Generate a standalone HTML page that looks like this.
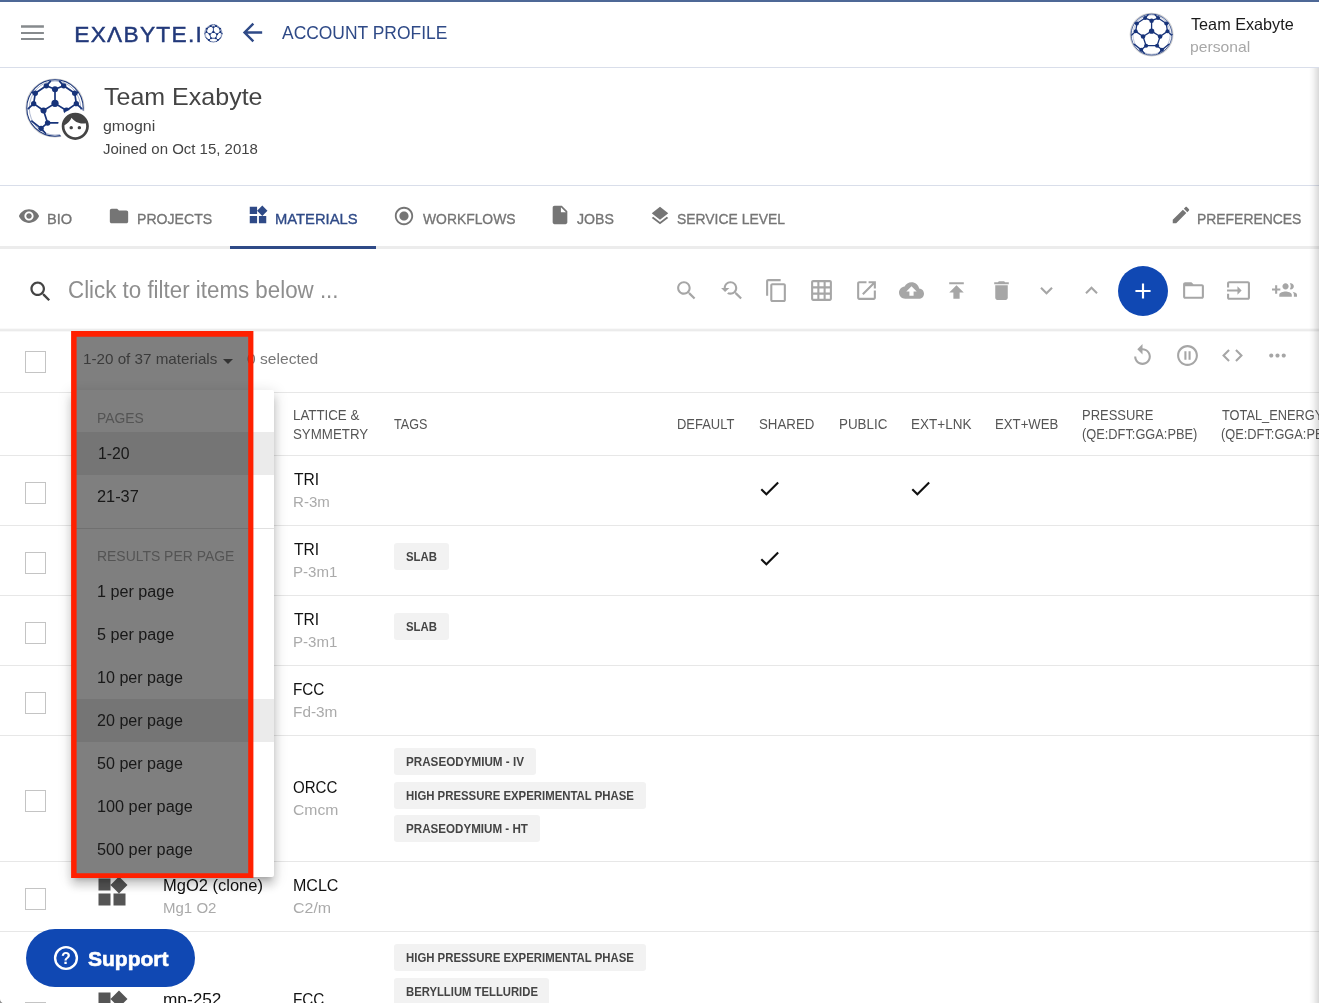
<!DOCTYPE html><html><head><meta charset="utf-8"><title>Account Profile</title><style>
html,body{margin:0;padding:0;background:#fff;}body{width:1319px;height:1003px;position:relative;overflow:hidden;font-family:"Liberation Sans", sans-serif;}
.t{position:absolute;white-space:pre;line-height:1;font-family:"Liberation Sans", sans-serif;transform-origin:0 0;}
.i{position:absolute;display:block;overflow:visible}.b{position:absolute;}
.cb{position:absolute;left:25px;width:19px;height:20px;border:1px solid #c4c4c4;background:#fff;}
.hl{position:absolute;left:0;width:1319px;height:1px;background:#e7e7e7;}
.tag{position:absolute;left:394px;height:27px;background:#f2f2f2;border-radius:3px;}
</style></head><body><div id="root" style="position:absolute;left:0;top:0;width:1319px;height:1003px;overflow:hidden;will-change:transform;">
<div class="b" style="left:0;top:0;width:1319px;height:2px;background:#4e6896"></div>
<div class="hl" style="top:67px;background:#d9deea"></div>
<div class="hl" style="top:185px;background:#d9deea"></div>
<div class="b" style="left:0;top:245.6px;width:1319px;height:3.4px;background:#ececec"></div>
<div class="b" style="left:230px;top:245.6px;width:146px;height:3.4px;background:#2f4a87"></div>
<div class="b" style="left:0;top:328.2px;width:1319px;height:4px;background:linear-gradient(to bottom,rgba(0,0,0,0),rgba(0,0,0,.085) 45%,rgba(0,0,0,.085) 58%,rgba(0,0,0,0))"></div>
<div class="hl" style="top:392px"></div>
<div class="hl" style="top:455px"></div>
<div class="cb" style="top:482px"></div>
<div class="hl" style="top:525px"></div>
<div class="cb" style="top:552px"></div>
<div class="hl" style="top:595px"></div>
<div class="cb" style="top:622px"></div>
<div class="hl" style="top:665px"></div>
<div class="cb" style="top:692px"></div>
<div class="hl" style="top:735px"></div>
<div class="cb" style="top:790px"></div>
<div class="hl" style="top:861px"></div>
<div class="cb" style="top:888px"></div>
<div class="hl" style="top:931px"></div>
<div class="cb" style="top:1002px"></div>
<div class="cb" style="top:351px"></div>
<div class="b" style="left:1118px;top:266px;width:50px;height:50px;border-radius:50%;background:#1048b3"></div>
<div class="tag" style="top:543px;width:54.5px"></div>
<div class="tag" style="top:613px;width:54.5px"></div>
<div class="tag" style="top:748px;width:141.5px"></div>
<div class="tag" style="top:782px;width:251.5px"></div>
<div class="tag" style="top:815.2px;width:145.5px"></div>
<div class="tag" style="top:944.2px;width:251.5px"></div>
<div class="tag" style="top:978px;width:154.5px"></div>
<svg class="i" style="left:21px;top:24px" width="24" height="17" viewBox="0 0 24 17"><path d="M0 1.2h22.9v2.6H0zM0 8h22.9v2H0zM0 14h22.9v2H0z" fill="#868a8d"/></svg>
<svg class="i" style="left:70px;top:18px" width="140" height="32" viewBox="0 0 140 32"><text x="4.3" y="23.5" font-family='"Liberation Sans", sans-serif' font-size="22.7" fill="#22397a" stroke="#22397a" stroke-width=".45" textLength="127.5" lengthAdjust="spacing">EXΛBYTE.I</text></svg>
<svg class="i" style="left:202.2px;top:21.8px" width="22.8" height="22.8" viewBox="-1.2128 -1.2128 2.4255 2.4255"><g stroke="#17337a" stroke-width="0.0904" fill="none" stroke-linecap="round"><circle r="0.926" stroke-width="0.0543"/><ellipse rx="0.841" ry="0.886" stroke-width="0.0271" stroke-opacity=".7"/><line x1="0" y1="-0.16" x2="0" y2="-0.645"/><line x1="0" y1="-0.16" x2="-0.395" y2="0.085"/><line x1="0" y1="-0.16" x2="0.395" y2="0.085"/><line x1="-0.395" y1="0.085" x2="-0.255" y2="0.515"/><line x1="0.395" y1="0.085" x2="0.255" y2="0.515"/><line x1="-0.255" y1="0.515" x2="0.255" y2="0.515"/><line x1="0" y1="-0.645" x2="-0.3" y2="-0.765"/><line x1="0" y1="-0.645" x2="0.3" y2="-0.765"/><line x1="-0.3" y1="-0.765" x2="-0.68" y2="-0.51"/><line x1="-0.68" y1="-0.51" x2="-0.735" y2="-0.15"/><line x1="-0.735" y1="-0.15" x2="-0.395" y2="0.085"/><line x1="0.3" y1="-0.765" x2="0.68" y2="-0.51"/><line x1="0.68" y1="-0.51" x2="0.735" y2="-0.15"/><line x1="0.735" y1="-0.15" x2="0.395" y2="0.085"/><line x1="-0.255" y1="0.515" x2="-0.48" y2="0.7"/><line x1="0.255" y1="0.515" x2="0.48" y2="0.7"/><line x1="-0.3" y1="-0.765" x2="-0.16" y2="-0.92"/><line x1="0.3" y1="-0.765" x2="0.16" y2="-0.92"/><line x1="-0.735" y1="-0.15" x2="-0.92" y2="0.02"/><line x1="0.735" y1="-0.15" x2="0.92" y2="0.02"/><line x1="-0.48" y1="0.7" x2="-0.33" y2="0.87"/><line x1="0.48" y1="0.7" x2="0.33" y2="0.87"/><line x1="-0.48" y1="0.7" x2="-0.8" y2="0.45"/><line x1="0.48" y1="0.7" x2="0.8" y2="0.45"/><line x1="-0.68" y1="-0.51" x2="-0.78" y2="-0.53"/><line x1="0.68" y1="-0.51" x2="0.78" y2="-0.53"/></g><g fill="#17337a"><circle cx="0" cy="-0.16" r="0.125"/><circle cx="0" cy="-0.645" r="0.105"/><circle cx="-0.395" cy="0.085" r="0.105"/><circle cx="0.395" cy="0.085" r="0.105"/><circle cx="-0.255" cy="0.515" r="0.095"/><circle cx="0.255" cy="0.515" r="0.095"/><circle cx="-0.3" cy="-0.765" r="0.092"/><circle cx="0.3" cy="-0.765" r="0.092"/><circle cx="-0.68" cy="-0.51" r="0.092"/><circle cx="0.68" cy="-0.51" r="0.092"/><circle cx="-0.735" cy="-0.15" r="0.092"/><circle cx="0.735" cy="-0.15" r="0.092"/><circle cx="-0.48" cy="0.7" r="0.092"/><circle cx="0.48" cy="0.7" r="0.092"/></g></svg>
<svg class="i" style="left:1127.5px;top:11.2px" width="47.2" height="47.2" viewBox="-1.0926 -1.0926 2.1852 2.1852"><circle r="0.990" fill="#fff" stroke="#d0d0d0" stroke-width="0.0509"/><g stroke="#17337a" stroke-width="0.0602" fill="none" stroke-linecap="round"><circle r="0.950" stroke-width="0.0361"/><ellipse rx="0.865" ry="0.910" stroke-width="0.0181" stroke-opacity=".7"/><line x1="0" y1="-0.16" x2="0" y2="-0.645"/><line x1="0" y1="-0.16" x2="-0.395" y2="0.085"/><line x1="0" y1="-0.16" x2="0.395" y2="0.085"/><line x1="-0.395" y1="0.085" x2="-0.255" y2="0.515"/><line x1="0.395" y1="0.085" x2="0.255" y2="0.515"/><line x1="-0.255" y1="0.515" x2="0.255" y2="0.515"/><line x1="0" y1="-0.645" x2="-0.3" y2="-0.765"/><line x1="0" y1="-0.645" x2="0.3" y2="-0.765"/><line x1="-0.3" y1="-0.765" x2="-0.68" y2="-0.51"/><line x1="-0.68" y1="-0.51" x2="-0.735" y2="-0.15"/><line x1="-0.735" y1="-0.15" x2="-0.395" y2="0.085"/><line x1="0.3" y1="-0.765" x2="0.68" y2="-0.51"/><line x1="0.68" y1="-0.51" x2="0.735" y2="-0.15"/><line x1="0.735" y1="-0.15" x2="0.395" y2="0.085"/><line x1="-0.255" y1="0.515" x2="-0.48" y2="0.7"/><line x1="0.255" y1="0.515" x2="0.48" y2="0.7"/><line x1="-0.3" y1="-0.765" x2="-0.16" y2="-0.92"/><line x1="0.3" y1="-0.765" x2="0.16" y2="-0.92"/><line x1="-0.735" y1="-0.15" x2="-0.92" y2="0.02"/><line x1="0.735" y1="-0.15" x2="0.92" y2="0.02"/><line x1="-0.48" y1="0.7" x2="-0.33" y2="0.87"/><line x1="0.48" y1="0.7" x2="0.33" y2="0.87"/><line x1="-0.48" y1="0.7" x2="-0.8" y2="0.45"/><line x1="0.48" y1="0.7" x2="0.8" y2="0.45"/><line x1="-0.68" y1="-0.51" x2="-0.78" y2="-0.53"/><line x1="0.68" y1="-0.51" x2="0.78" y2="-0.53"/></g><g fill="#17337a"><circle cx="0" cy="-0.16" r="0.125"/><circle cx="0" cy="-0.645" r="0.105"/><circle cx="-0.395" cy="0.085" r="0.105"/><circle cx="0.395" cy="0.085" r="0.105"/><circle cx="-0.255" cy="0.515" r="0.095"/><circle cx="0.255" cy="0.515" r="0.095"/><circle cx="-0.3" cy="-0.765" r="0.092"/><circle cx="0.3" cy="-0.765" r="0.092"/><circle cx="-0.68" cy="-0.51" r="0.092"/><circle cx="0.68" cy="-0.51" r="0.092"/><circle cx="-0.735" cy="-0.15" r="0.092"/><circle cx="0.735" cy="-0.15" r="0.092"/><circle cx="-0.48" cy="0.7" r="0.092"/><circle cx="0.48" cy="0.7" r="0.092"/></g></svg>
<svg class="i" style="left:24.1px;top:77.4px" width="62.0" height="62.0" viewBox="-1.0690 -1.0690 2.1379 2.1379"><circle r="1.000" fill="#fff" stroke="#d0d0d0" stroke-width="0.0379"/><g stroke="#17337a" stroke-width="0.0586" fill="none" stroke-linecap="round"><circle r="0.972" stroke-width="0.0352"/><ellipse rx="0.887" ry="0.932" stroke-width="0.0176" stroke-opacity=".7"/><line x1="0" y1="-0.16" x2="0" y2="-0.645"/><line x1="0" y1="-0.16" x2="-0.395" y2="0.085"/><line x1="0" y1="-0.16" x2="0.395" y2="0.085"/><line x1="-0.395" y1="0.085" x2="-0.255" y2="0.515"/><line x1="0.395" y1="0.085" x2="0.255" y2="0.515"/><line x1="-0.255" y1="0.515" x2="0.255" y2="0.515"/><line x1="0" y1="-0.645" x2="-0.3" y2="-0.765"/><line x1="0" y1="-0.645" x2="0.3" y2="-0.765"/><line x1="-0.3" y1="-0.765" x2="-0.68" y2="-0.51"/><line x1="-0.68" y1="-0.51" x2="-0.735" y2="-0.15"/><line x1="-0.735" y1="-0.15" x2="-0.395" y2="0.085"/><line x1="0.3" y1="-0.765" x2="0.68" y2="-0.51"/><line x1="0.68" y1="-0.51" x2="0.735" y2="-0.15"/><line x1="0.735" y1="-0.15" x2="0.395" y2="0.085"/><line x1="-0.255" y1="0.515" x2="-0.48" y2="0.7"/><line x1="0.255" y1="0.515" x2="0.48" y2="0.7"/><line x1="-0.3" y1="-0.765" x2="-0.16" y2="-0.92"/><line x1="0.3" y1="-0.765" x2="0.16" y2="-0.92"/><line x1="-0.735" y1="-0.15" x2="-0.92" y2="0.02"/><line x1="0.735" y1="-0.15" x2="0.92" y2="0.02"/><line x1="-0.48" y1="0.7" x2="-0.33" y2="0.87"/><line x1="0.48" y1="0.7" x2="0.33" y2="0.87"/><line x1="-0.48" y1="0.7" x2="-0.8" y2="0.45"/><line x1="0.48" y1="0.7" x2="0.8" y2="0.45"/><line x1="-0.68" y1="-0.51" x2="-0.78" y2="-0.53"/><line x1="0.68" y1="-0.51" x2="0.78" y2="-0.53"/></g><g fill="#17337a"><circle cx="0" cy="-0.16" r="0.125"/><circle cx="0" cy="-0.645" r="0.105"/><circle cx="-0.395" cy="0.085" r="0.105"/><circle cx="0.395" cy="0.085" r="0.105"/><circle cx="-0.255" cy="0.515" r="0.095"/><circle cx="0.255" cy="0.515" r="0.095"/><circle cx="-0.3" cy="-0.765" r="0.092"/><circle cx="0.3" cy="-0.765" r="0.092"/><circle cx="-0.68" cy="-0.51" r="0.092"/><circle cx="0.68" cy="-0.51" r="0.092"/><circle cx="-0.735" cy="-0.15" r="0.092"/><circle cx="0.735" cy="-0.15" r="0.092"/><circle cx="-0.48" cy="0.7" r="0.092"/><circle cx="0.48" cy="0.7" r="0.092"/></g></svg>
<div class="b" style="left:57.7px;top:108.9px;width:35.6px;height:35.6px;border-radius:50%;background:#fff"></div>
<span class="t" style="left:281.8px;top:24px;font-size:18.5px;color:#2f4a87;transform:scaleX(0.9423);">ACCOUNT PROFILE</span>
<span class="t" style="left:1191.4px;top:16px;font-size:16.5px;color:#1a1a1a;transform:scaleX(0.9822);">Team Exabyte</span>
<span class="t" style="left:1190.4px;top:39px;font-size:15px;color:#a8a8a8;transform:scaleX(1.0459);">personal</span>
<span class="t" style="left:104.3px;top:85px;font-size:24px;color:#444;transform:scaleX(1.0423);">Team Exabyte</span>
<span class="t" style="left:103.3px;top:118px;font-size:15px;color:#444;transform:scaleX(1.0609);">gmogni</span>
<span class="t" style="left:103.3px;top:141px;font-size:15px;color:#444;transform:scaleX(0.9987);">Joined on Oct 15, 2018</span>
<span class="t" style="left:47.3px;top:211px;font-size:15.3px;color:#757575;transform:scaleX(0.9573);-webkit-text-stroke:.35px #757575;">BIO</span>
<span class="t" style="left:136.8px;top:211px;font-size:15.3px;color:#757575;transform:scaleX(0.9209);-webkit-text-stroke:.35px #757575;">PROJECTS</span>
<span class="t" style="left:275.4px;top:211px;font-size:15.3px;color:#2f4a87;transform:scaleX(0.9646);-webkit-text-stroke:.35px #2f4a87;">MATERIALS</span>
<span class="t" style="left:422.8px;top:211px;font-size:15.3px;color:#757575;transform:scaleX(0.9071);-webkit-text-stroke:.35px #757575;">WORKFLOWS</span>
<span class="t" style="left:577.2px;top:211px;font-size:15.3px;color:#757575;transform:scaleX(0.9238);-webkit-text-stroke:.35px #757575;">JOBS</span>
<span class="t" style="left:676.8px;top:211px;font-size:15.3px;color:#757575;transform:scaleX(0.9089);-webkit-text-stroke:.35px #757575;">SERVICE LEVEL</span>
<span class="t" style="left:1197.3px;top:211px;font-size:15.3px;color:#757575;transform:scaleX(0.9094);-webkit-text-stroke:.35px #757575;">PREFERENCES</span>
<span class="t" style="left:68.3px;top:279px;font-size:23px;color:#8e8e8e;transform:scaleX(0.9709);">Click to filter items below ...</span>
<span class="t" style="left:82.5px;top:351px;font-size:15px;color:#777;transform:scaleX(1.0132);">1-20 of 37 materials</span>
<span class="t" style="left:247.4px;top:351px;font-size:15px;color:#777;transform:scaleX(1.0412);">0 selected</span>
<span class="t" style="left:292.5px;top:408px;font-size:14px;color:#555;transform:scaleX(0.9507);">LATTICE &amp;</span>
<span class="t" style="left:292.5px;top:427px;font-size:14px;color:#555;transform:scaleX(0.9498);">SYMMETRY</span>
<span class="t" style="left:393.8px;top:417px;font-size:14px;color:#555;transform:scaleX(0.8982);">TAGS</span>
<span class="t" style="left:676.8px;top:417px;font-size:14px;color:#555;transform:scaleX(0.9249);">DEFAULT</span>
<span class="t" style="left:759.3px;top:417px;font-size:14px;color:#555;transform:scaleX(0.9487);">SHARED</span>
<span class="t" style="left:838.8px;top:417px;font-size:14px;color:#555;transform:scaleX(0.9564);">PUBLIC</span>
<span class="t" style="left:910.8px;top:417px;font-size:14px;color:#555;transform:scaleX(0.9642);">EXT+LNK</span>
<span class="t" style="left:994.8px;top:417px;font-size:14px;color:#555;transform:scaleX(0.9414);">EXT+WEB</span>
<span class="t" style="left:1081.8px;top:408px;font-size:14px;color:#555;transform:scaleX(0.9262);">PRESSURE</span>
<span class="t" style="left:1081.8px;top:427px;font-size:14px;color:#555;transform:scaleX(0.9152);">(QE:DFT:GGA:PBE)</span>
<span class="t" style="left:1221.8px;top:408px;font-size:14px;color:#555;transform:scaleX(0.9147);">TOTAL_ENERGY</span>
<span class="t" style="left:1220.8px;top:427px;font-size:14px;color:#555;transform:scaleX(0.9152);">(QE:DFT:GGA:PBE)</span>
<span class="t" style="left:293.5px;top:472px;font-size:16px;color:#111;transform:scaleX(0.9760);">TRI</span>
<span class="t" style="left:292.5px;top:494px;font-size:15px;color:#aaa;transform:scaleX(1.0041);">R-3m</span>
<span class="t" style="left:293.5px;top:542px;font-size:16px;color:#111;transform:scaleX(0.9760);">TRI</span>
<span class="t" style="left:292.5px;top:564px;font-size:15px;color:#aaa;transform:scaleX(1.0043);">P-3m1</span>
<span class="t" style="left:293.5px;top:612px;font-size:16px;color:#111;transform:scaleX(0.9760);">TRI</span>
<span class="t" style="left:292.5px;top:634px;font-size:15px;color:#aaa;transform:scaleX(1.0043);">P-3m1</span>
<span class="t" style="left:292.5px;top:682px;font-size:16px;color:#111;transform:scaleX(0.9552);">FCC</span>
<span class="t" style="left:292.5px;top:704px;font-size:15px;color:#aaa;transform:scaleX(1.0239);">Fd-3m</span>
<span class="t" style="left:292.5px;top:780px;font-size:16px;color:#111;transform:scaleX(0.9421);">ORCC</span>
<span class="t" style="left:292.5px;top:802px;font-size:15px;color:#aaa;transform:scaleX(1.0485);">Cmcm</span>
<span class="t" style="left:162.7px;top:878px;font-size:16px;color:#111;transform:scaleX(1.0315);">MgO2 (clone)</span>
<span class="t" style="left:162.7px;top:900px;font-size:15px;color:#aaa;transform:scaleX(1.0009);">Mg1 O2</span>
<span class="t" style="left:292.5px;top:878px;font-size:16px;color:#111;transform:scaleX(1.0019);">MCLC</span>
<span class="t" style="left:292.5px;top:900px;font-size:15px;color:#aaa;transform:scaleX(1.0653);">C2/m</span>
<span class="t" style="left:162.7px;top:992px;font-size:16px;color:#111;transform:scaleX(1.0765);">mp-252</span>
<span class="t" style="left:162.7px;top:1014px;font-size:15px;color:#aaa;transform:scaleX(1.0296);">Be1 Te1</span>
<span class="t" style="left:292.5px;top:992px;font-size:16px;color:#111;transform:scaleX(0.9552);">FCC</span>
<span class="t" style="left:292.5px;top:1014px;font-size:15px;color:#aaa;transform:scaleX(1.0711);">F-43m</span>
<span class="t" style="left:406.1px;top:551px;font-size:12px;color:#444;font-weight:700;transform:scaleX(0.9486);">SLAB</span>
<span class="t" style="left:406.1px;top:621px;font-size:12px;color:#444;font-weight:700;transform:scaleX(0.9486);">SLAB</span>
<span class="t" style="left:406.1px;top:756px;font-size:12px;color:#444;font-weight:700;transform:scaleX(0.9717);">PRASEODYMIUM - IV</span>
<span class="t" style="left:406.1px;top:790px;font-size:12px;color:#444;font-weight:700;transform:scaleX(0.9486);">HIGH PRESSURE EXPERIMENTAL PHASE</span>
<span class="t" style="left:406.1px;top:823px;font-size:12px;color:#444;font-weight:700;transform:scaleX(0.9675);">PRASEODYMIUM - HT</span>
<span class="t" style="left:406.1px;top:952px;font-size:12px;color:#444;font-weight:700;transform:scaleX(0.9486);">HIGH PRESSURE EXPERIMENTAL PHASE</span>
<span class="t" style="left:406.1px;top:986px;font-size:12px;color:#444;font-weight:700;transform:scaleX(0.9408);">BERYLLIUM TELLURIDE</span>
<svg class="i" style="left:238.0px;top:18.2px" width="29" height="29" viewBox="0 0 24 24"><path fill="#2f4a87" d="M20 11H7.83l5.59-5.59L12 4l-8 8 8 8 1.41-1.41L7.83 13H20v-2z"/></svg>
<svg class="i" style="left:18.0px;top:204.6px" width="22" height="22" viewBox="0 0 24 24"><path fill="#757575" d="M12 4.5C7 4.5 2.73 7.61 1 12c1.73 4.39 6 7.500 11 7.500s9.270-3.110 11-7.500c-1.730-4.390-6-7.500-11-7.500zM12 17c-2.760 0-5-2.240-5-5s2.240-5 5-5 5 2.240 5 5-2.240 5-5 5zm0-8c-1.660 0-3 1.340-3 3s1.340 3 3 3 3-1.340 3-3-1.340-3-3-3z"/></svg>
<svg class="i" style="left:108.3px;top:204.6px" width="22" height="22" viewBox="0 0 24 24"><path fill="#757575" d="M10 4H4c-1.1 0-1.99.9-1.99 2L2 18c0 1.1.9 2 2 2h16c1.1 0 2-.9 2-2V8c0-1.1-.9-2-2-2h-8l-2-2z"/></svg>
<svg class="i" style="left:246.6px;top:204.0px" width="22" height="22" viewBox="0 0 24 24"><path fill="#2f4a87" d="M13 13v8h8v-8h-8zM3 21h8v-8H3v8zM3 3v8h8V3H3zm13.66-1.310L11 7.340 16.660 13l5.660-5.660-5.660-5.650z"/></svg>
<svg class="i" style="left:393.0px;top:204.5px" width="22" height="22" viewBox="0 0 24 24"><path fill="#757575" d="M12 7c-2.760 0-5 2.240-5 5s2.240 5 5 5 5-2.240 5-5-2.240-5-5-5zm0-5C6.480 2 2 6.480 2 12s4.480 10 10 10 10-4.480 10-10S17.520 2 12 2zm0 18c-4.420 0-8-3.580-8-8s3.580-8 8-8 8 3.580 8 8-3.580 8-8 8z"/></svg>
<svg class="i" style="left:549.3px;top:204.4px" width="22" height="22" viewBox="0 0 24 24"><path fill="#757575" d="M6 2c-1.1 0-1.990.9-1.990 2L4 20c0 1.100.890 2 1.990 2H18c1.100 0 2-.9 2-2V8l-6-6H6zm7 7V3.500L18.500 9H13z"/></svg>
<svg class="i" style="left:649.3px;top:204.5px" width="22" height="22" viewBox="0 0 24 24"><path fill="#757575" d="M11.990 18.540l-7.370-5.730L3 14.070l9 7 9-7-1.630-1.270-7.380 5.740zM12 16l7.360-5.730L21 9l-9-7-9 7 1.630 1.270L12 16z"/></svg>
<svg class="i" style="left:1169.5px;top:204.2px" width="22" height="22" viewBox="0 0 24 24"><path fill="#757575" d="M3 17.250V21h3.750L17.810 9.940l-3.750-3.750L3 17.250zM20.710 7.040c.390-.390.390-1.020 0-1.410l-2.340-2.340c-.390-.390-1.020-.390-1.410 0l-1.830 1.830 3.750 3.750 1.830-1.830z"/></svg>
<svg class="i" style="left:27.0px;top:278.2px" width="27" height="27" viewBox="0 0 24 24"><path fill="#444" d="M15.5 14h-.79l-.28-.27C15.41 12.59 16 11.11 16 9.5 16 5.91 13.09 3 9.5 3S3 5.91 3 9.5 5.91 16 9.5 16c1.61 0 3.09-.59 4.23-1.57l.27.28v.79l5 4.99L20.49 19l-4.99-5zm-6 0C7.01 14 5 11.99 5 9.5S7.01 5 9.5 5 14 7.01 14 9.5 11.99 14 9.5 14z"/></svg>
<svg class="i" style="left:674.2px;top:278.1px" width="25" height="25" viewBox="0 0 24 24"><path fill="#a6a6a6" d="M15.5 14h-.79l-.28-.27C15.41 12.59 16 11.11 16 9.5 16 5.91 13.09 3 9.5 3S3 5.91 3 9.5 5.91 16 9.5 16c1.61 0 3.09-.59 4.23-1.57l.27.28v.79l5 4.99L20.49 19l-4.99-5zm-6 0C7.01 14 5 11.99 5 9.5S7.01 5 9.5 5 14 7.01 14 9.5 11.99 14 9.5 14z"/></svg>
<svg class="i" style="left:719.2px;top:278.1px" width="25" height="25" viewBox="0 0 24 24"><path fill="#a6a6a6" d="M17.01 14h-.8l-.27-.27c.98-1.14 1.57-2.61 1.57-4.23 0-3.59-2.91-6.5-6.5-6.5s-6.5 3-6.5 6.5H2l3.84 4 4.16-4H6.51C6.51 7 8.53 5 11.01 5s4.5 2.01 4.5 4.5c0 2.48-2.02 4.5-4.5 4.5-.65 0-1.26-.14-1.82-.38L7.71 15.1c.97.57 2.09.9 3.3.9 1.61 0 3.08-.59 4.22-1.57l.27.27v.79l5.01 4.99L22 19l-4.99-5z"/></svg>
<svg class="i" style="left:764.2px;top:278.1px" width="25" height="25" viewBox="0 0 24 24"><path fill="#a6a6a6" d="M16 1H4c-1.1 0-2 .9-2 2v14h2V3h12V1zm3 4H8c-1.1 0-2 .9-2 2v14c0 1.1.9 2 2 2h11c1.1 0 2-.9 2-2V7c0-1.1-.9-2-2-2zm0 16H8V7h11v14z"/></svg>
<svg class="i" style="left:809.2px;top:278.1px" width="25" height="25" viewBox="0 0 24 24"><path fill="#a6a6a6" d="M20 2H4c-1.1 0-2 .9-2 2v16c0 1.1.9 2 2 2h16c1.1 0 2-.9 2-2V4c0-1.1-.9-2-2-2zM8 20H4v-4h4v4zm0-6H4v-4h4v4zm0-6H4V4h4v4zm6 12h-4v-4h4v4zm0-6h-4v-4h4v4zm0-6h-4V4h4v4zm6 12h-4v-4h4v4zm0-6h-4v-4h4v4zm0-6h-4V4h4v4z"/></svg>
<svg class="i" style="left:854.2px;top:278.1px" width="25" height="25" viewBox="0 0 24 24"><path fill="#a6a6a6" d="M19 19H5V5h7V3H5c-1.11 0-2 .9-2 2v14c0 1.1.89 2 2 2h14c1.1 0 2-.9 2-2v-7h-2v7zM14 3v2h3.59l-9.83 9.83 1.41 1.41L19 6.41V10h2V3h-7z"/></svg>
<svg class="i" style="left:899.2px;top:278.1px" width="25" height="25" viewBox="0 0 24 24"><path fill="#a6a6a6" d="M19.35 10.04C18.67 6.59 15.64 4 12 4 9.11 4 6.6 5.64 5.35 8.04 2.34 8.36 0 10.91 0 14c0 3.31 2.69 6 6 6h13c2.76 0 5-2.24 5-5 0-2.64-2.05-4.78-4.65-4.96zM14 13v4h-4v-4H7l5-5 5 5h-3z"/></svg>
<svg class="i" style="left:944.2px;top:278.1px" width="25" height="25" viewBox="0 0 24 24"><path fill="#a6a6a6" d="M5 4v2h14V4H5zm0 10h4v6h6v-6h4l-7-7-7 7z"/></svg>
<svg class="i" style="left:989.2px;top:278.1px" width="25" height="25" viewBox="0 0 24 24"><path fill="#a6a6a6" d="M6 19c0 1.1.9 2 2 2h8c1.1 0 2-.9 2-2V7H6v12zM19 4h-3.5l-1-1h-5l-1 1H5v2h14V4z"/></svg>
<svg class="i" style="left:1034.2px;top:278.1px" width="25" height="25" viewBox="0 0 24 24"><path fill="#a6a6a6" d="M16.59 8.59L12 13.17 7.41 8.59 6 10l6 6 6-6z"/></svg>
<svg class="i" style="left:1079.2px;top:278.1px" width="25" height="25" viewBox="0 0 24 24"><path fill="#a6a6a6" d="M12 8l-6 6 1.41 1.41L12 10.83l4.59 4.58L18 14z"/></svg>
<svg class="i" style="left:1130.0px;top:278.0px" width="26" height="26" viewBox="0 0 24 24"><path fill="#fff" d="M19 13h-6v6h-2v-6H5v-2h6V5h2v6h6v2z"/></svg>
<svg class="i" style="left:1181.3px;top:278.1px" width="25" height="25" viewBox="0 0 24 24"><path fill="#a6a6a6" d="M20 6h-8l-2-2H4c-1.1 0-1.99.9-1.99 2L2 18c0 1.1.9 2 2 2h16c1.1 0 2-.9 2-2V8c0-1.1-.9-2-2-2zm0 12H4V8h16v10z"/></svg>
<svg class="i" style="left:1226.3px;top:278.1px" width="25" height="25" viewBox="0 0 24 24"><path fill="#a6a6a6" d="M21 3.01H3c-1.1 0-2 .9-2 2V9h2V4.99h18v14.03H3V15H1v4.01c0 1.1.9 1.98 2 1.98h18c1.1 0 2-.88 2-1.98v-14c0-1.11-.9-2-2-2zM11 16l4-4-4-4v3H1v2h10v3z"/></svg>
<svg class="i" style="left:1271.7px;top:278.1px" width="25" height="25" viewBox="0 0 24 24"><path fill="#a6a6a6" d="M8 10H5V7H3v3H0v2h3v3h2v-3h3v-2zm10 1c1.66 0 2.99-1.34 2.99-3S19.66 5 18 5c-.32 0-.63.05-.91.14.57.81.9 1.79.9 2.86s-.34 2.04-.9 2.86c.28.09.59.14.91.14zm-5 0c1.66 0 2.99-1.34 2.99-3S14.660 5 13 5c-1.66 0-3 1.34-3 3s1.34 3 3 3zm6.62 2.16c.83.73 1.38 1.66 1.38 2.84v2h3v-2c0-1.54-2.37-2.49-4.38-2.84zM13 13c-2 0-6 1-6 3v2h12v-2c0-2-4-3-6-3z"/></svg>
<svg class="i" style="left:215.9px;top:348.5px" width="24" height="24" viewBox="0 0 24 24"><path fill="#666" d="M7 10l5 5 5-5z"/></svg>
<svg class="i" style="left:1130.2px;top:343.1px" width="25" height="25" viewBox="0 0 24 24"><path fill="#a6a6a6" d="M12 5V1L7 6l5 5V7c3.31 0 6 2.69 6 6s-2.69 6-6 6-6-2.69-6-6H4c0 4.42 3.58 8 8 8s8-3.58 8-8-3.58-8-8-8z"/></svg>
<svg class="i" style="left:1175.3px;top:343.1px" width="25" height="25" viewBox="0 0 24 24"><path fill="#a6a6a6" d="M9 16h2V8H9v8zm3-14C6.48 2 2 6.48 2 12s4.48 10 10 10 10-4.48 10-10S17.52 2 12 2zm0 18c-4.41 0-8-3.59-8-8s3.59-8 8-8 8 3.59 8 8-3.59 8-8 8zm1-4h2V8h-2v8z"/></svg>
<svg class="i" style="left:1220.1px;top:343.1px" width="25" height="25" viewBox="0 0 24 24"><path fill="#a6a6a6" d="M9.4 16.6L4.8 12l4.6-4.6L8 6l-6 6 6 6 1.4-1.4zm5.2 0l4.6-4.6-4.6-4.6L16 6l6 6-6 6-1.4-1.4z"/></svg>
<svg class="i" style="left:1265.2px;top:343.1px" width="25" height="25" viewBox="0 0 24 24"><path fill="#a6a6a6" d="M6 10c-1.1 0-2 .9-2 2s.9 2 2 2 2-.9 2-2-.9-2-2-2zm12 0c-1.1 0-2 .9-2 2s.9 2 2 2 2-.9 2-2-.9-2-2-2zm-6 0c-1.1 0-2 .9-2 2s.9 2 2 2 2-.9 2-2-.9-2-2-2z"/></svg>
<svg class="i" style="left:93.7px;top:874.3px" width="36" height="36" viewBox="0 0 24 24"><path fill="#555" d="M13 13v8h8v-8h-8zM3 21h8v-8H3v8zM3 3v8h8V3H3zm13.66-1.310L11 7.340 16.660 13l5.660-5.660-5.660-5.650z"/></svg>
<svg class="i" style="left:93.7px;top:988.3px" width="36" height="36" viewBox="0 0 24 24"><path fill="#555" d="M13 13v8h8v-8h-8zM3 21h8v-8H3v8zM3 3v8h8V3H3zm13.66-1.310L11 7.340 16.660 13l5.660-5.660-5.660-5.650z"/></svg>
<svg class="i" style="left:756.9px;top:476.4px" width="25" height="25" viewBox="0 0 24 24"><path fill="#111" d="M9 16.170L4.830 12l-1.420 1.410L9 19 21 7l-1.410-1.410z"/></svg>
<svg class="i" style="left:907.9px;top:476.4px" width="25" height="25" viewBox="0 0 24 24"><path fill="#111" d="M9 16.170L4.830 12l-1.420 1.410L9 19 21 7l-1.410-1.410z"/></svg>
<svg class="i" style="left:756.9px;top:546.4px" width="25" height="25" viewBox="0 0 24 24"><path fill="#111" d="M9 16.170L4.830 12l-1.420 1.410L9 19 21 7l-1.410-1.410z"/></svg>
<svg class="i" style="left:59.2px;top:110.4px" width="32.6" height="32.6" viewBox="0 0 24 24"><path fill="#444" d="M9 11.750c-.690 0-1.250.560-1.250 1.250s.560 1.250 1.250 1.250 1.250-.560 1.250-1.250-.560-1.250-1.250-1.250zm6 0c-.690 0-1.250.560-1.250 1.250s.560 1.250 1.250 1.250 1.250-.560 1.250-1.250-.560-1.250-1.250-1.250zM12 2C6.480 2 2 6.480 2 12s4.480 10 10 10 10-4.480 10-10S17.520 2 12 2zm0 18c-4.410 0-8-3.590-8-8 0-.290.020-.580.050-.860 2.360-1.050 4.230-2.980 5.210-5.370C11.070 8.330 14.050 10 17.420 10c.780 0 1.530-.090 2.250-.260.210.710.330 1.470.330 2.260 0 4.410-3.590 8-8 8z"/></svg>
<div class="b" style="left:1309px;top:68px;width:10px;height:935px;background:linear-gradient(to right,rgba(0,0,0,0),rgba(0,0,0,.04) 40%,rgba(0,0,0,.15))"></div>
<div class="b" style="left:72px;top:390px;width:202px;height:486.5px;background:#fff;border-radius:2px;box-shadow:0 5px 5px -3px rgba(0,0,0,.2),0 8px 10px 1px rgba(0,0,0,.14),0 3px 14px 2px rgba(0,0,0,.12)">
<div class="b" style="left:0;top:42px;width:202px;height:43px;background:#ebebeb"></div>
<div class="b" style="left:0;top:309px;width:202px;height:43px;background:#ebebeb"></div>
<div class="b" style="left:0;top:138px;width:202px;height:1px;background:#e0e0e0"></div>
</div>
<span class="t" style="left:97.0px;top:411px;font-size:14px;color:#a8a8a8;transform:scaleX(0.9904);">PAGES</span>
<span class="t" style="left:97.9px;top:446px;font-size:16px;color:#333;transform:scaleX(0.9875);">1-20</span>
<span class="t" style="left:96.7px;top:489px;font-size:16px;color:#333;transform:scaleX(1.0216);">21-37</span>
<span class="t" style="left:97.0px;top:549px;font-size:14px;color:#a8a8a8;transform:scaleX(0.9954);">RESULTS PER PAGE</span>
<span class="t" style="left:97.3px;top:584px;font-size:16px;color:#333;transform:scaleX(1.0085);">1 per page</span>
<span class="t" style="left:97.3px;top:627px;font-size:16px;color:#333;transform:scaleX(1.0085);">5 per page</span>
<span class="t" style="left:97.3px;top:670px;font-size:16px;color:#333;transform:scaleX(1.0061);">10 per page</span>
<span class="t" style="left:97.3px;top:713px;font-size:16px;color:#333;transform:scaleX(1.0061);">20 per page</span>
<span class="t" style="left:97.3px;top:756px;font-size:16px;color:#333;transform:scaleX(1.0061);">50 per page</span>
<span class="t" style="left:97.3px;top:799px;font-size:16px;color:#333;transform:scaleX(1.0152);">100 per page</span>
<span class="t" style="left:97.3px;top:842px;font-size:16px;color:#333;transform:scaleX(1.0152);">500 per page</span>
<svg class="i" style="left:70px;top:330px" width="186" height="550" viewBox="70 330 186 550"><rect x="76" y="336" width="173" height="538" fill="rgba(0,0,0,.5)"/><path fill-rule="evenodd" fill="#ff2000" d="M71.1 331.1H253.4V878.1H71.1ZM76.6 336.7H248.2V873.2H76.6Z"/></svg>
<div class="b" style="left:26px;top:928.7px;width:169px;height:58.3px;border-radius:30px;background:#1048b3"></div>
<svg class="i" style="left:52.4px;top:943.9px" width="28" height="28" viewBox="0 0 28 28"><circle cx="14" cy="14" r="10.9" fill="none" stroke="#fff" stroke-width="2.4"/><text x="14" y="19.6" text-anchor="middle" font-family='"Liberation Sans", sans-serif' font-weight="700" font-size="16" fill="#fff">?</text></svg>
<span class="t" style="left:87.8px;top:949px;font-size:20.5px;color:#fff;font-weight:700;transform:scaleX(1.0251);-webkit-text-stroke:.6px #fff;">Support</span>
<svg class="i" style="left:0;top:998.6px" width="4.4" height="4.4" viewBox="0 0 4.4 4.4"><path d="M0 0 A4.4 4.4 0 0 0 4.4 4.4 L0 4.4 Z" fill="#8e8e8e"/></svg>
</div></body></html>
